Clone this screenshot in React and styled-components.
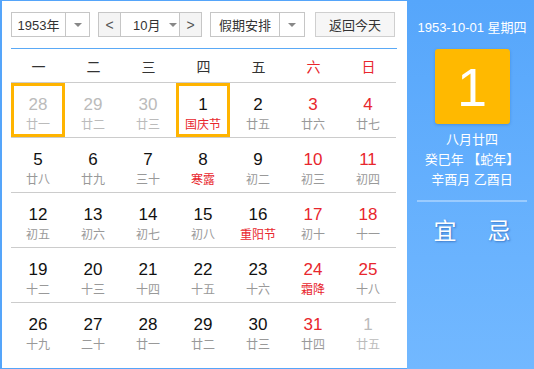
import React from "react";
import styled, { createGlobalStyle } from "styled-components";

const FONT = `"Liberation Sans", "Noto Sans CJK SC", sans-serif`;

const GlobalStyle = createGlobalStyle`
  body {
    margin: 0;
    background: #fff;
    font-family: ${FONT};
  }
`;

const WEEKDAYS = ["一", "二", "三", "四", "五", "六", "日"];

// [day, lunar, flags] flags: o = other month, f = festival, h = highlighted
const WEEKS = [
  [[28, "廿一", "oh"], [29, "廿二", "o"], [30, "廿三", "o"], [1, "国庆节", "fh"], [2, "廿五"], [3, "廿六"], [4, "廿七"]],
  [[5, "廿八"], [6, "廿九"], [7, "三十"], [8, "寒露", "f"], [9, "初二"], [10, "初三"], [11, "初四"]],
  [[12, "初五"], [13, "初六"], [14, "初七"], [15, "初八"], [16, "重阳节", "f"], [17, "初十"], [18, "十一"]],
  [[19, "十二"], [20, "十三"], [21, "十四"], [22, "十五"], [23, "十六"], [24, "霜降", "f"], [25, "十八"]],
  [[26, "十九"], [27, "二十"], [28, "廿一"], [29, "廿二"], [30, "廿三"], [31, "廿四"], [1, "廿五", "o"]],
];

export default function App() {
  return (
    <>
      <GlobalStyle />
      <Frame>
        <Main>
          <Toolbar>
            <Select $w={79} $text={55}>
              <span>1953年</span>
              <Caret />
            </Select>
            <MonthGroup>
              <NavBtn>&lt;</NavBtn>
              <MonthSel>
                <span>10月</span>
                <Caret />
              </MonthSel>
              <NavBtn>&gt;</NavBtn>
            </MonthGroup>
            <Select $w={95} $text={70}>
              <span>假期安排</span>
              <Caret />
            </Select>
            <TodayBtn>返回今天</TodayBtn>
          </Toolbar>
          <Grid>
            <HeadRow>
              {WEEKDAYS.map((w, i) => (
                <HeadCell key={w} $red={i >= 5}>{w}</HeadCell>
              ))}
            </HeadRow>
            {WEEKS.map((week, r) => (
              <Row key={r} $last={r === WEEKS.length - 1}>
                {week.map(([d, lunar, flags = ""], i) => {
                  const other = flags.includes("o");
                  return (
                    <Cell key={i} $hl={flags.includes("h")}>
                      <Day $tone={other ? "light" : i >= 5 ? "red" : "dark"}>{d}</Day>
                      <Lunar $tone={flags.includes("f") ? "red" : other ? "light" : "gray"}>
                        {lunar}
                      </Lunar>
                    </Cell>
                  );
                })}
              </Row>
            ))}
          </Grid>
        </Main>
        <Side>
          <DateLine>1953-10-01 星期四</DateLine>
          <BigDay>1</BigDay>
          <LunarInfo>
            <div>八月廿四</div>
            <div>癸巳年 【蛇年】</div>
            <div>辛酉月 乙酉日</div>
          </LunarInfo>
          <Divider />
          <Omen>
            <span>宜</span>
            <span>忌</span>
          </Omen>
        </Side>
      </Frame>
    </>
  );
}

const Frame = styled.div`
  width: 534px;
  height: 369px;
  box-sizing: border-box;
  display: flex;
  padding: 1px 0 1px 2px;
  background: #55a5fa;
`;

const Main = styled.div`
  width: 405px;
  background: #fff;
  padding: 11px 10px 0 9px;
  box-sizing: border-box;
`;

const Toolbar = styled.div`
  display: flex;
  height: 25px;
  gap: 8px;
  padding-bottom: 11px;
  border-bottom: 1px solid #5aa9f6;
  font-size: 13px;
  color: #333;
`;

const Select = styled.div`
  width: ${(p) => p.$w}px;
  box-sizing: border-box;
  display: grid;
  grid-template-columns: ${(p) => p.$text - 1}px 1fr;
  border: 1px solid #c6c6c6;
  background: #fff;
  span {
    display: flex;
    align-items: center;
    justify-content: center;
    border-right: 1px solid #c6c6c6;
  }
`;

const Caret = styled.i`
  display: flex;
  align-items: center;
  justify-content: center;
  &::after {
    content: "";
    border-left: 4px solid transparent;
    border-right: 4px solid transparent;
    border-top: 4px solid #888;
  }
`;

const MonthGroup = styled.div`
  width: 104px;
  box-sizing: border-box;
  display: flex;
  border: 1px solid #c6c6c6;
`;

const NavBtn = styled.div`
  width: 21px;
  display: flex;
  align-items: center;
  justify-content: center;
  background: #f4f4f4;
  color: #555;
  font-size: 14px;
  &:first-child {
    border-right: 1px solid #c6c6c6;
  }
  &:last-child {
    border-left: 1px solid #c6c6c6;
  }
`;

const MonthSel = styled.div`
  flex: 1;
  display: flex;
  align-items: center;
  padding-left: 12px;
  gap: 9px;
  background: #fff;
`;

const TodayBtn = styled.div`
  width: 80px;
  margin-left: 2px;
  box-sizing: border-box;
  display: flex;
  align-items: center;
  justify-content: center;
  border: 1px solid #cfcfcf;
  background: #f6f6f6;
  color: #333;
`;

const Grid = styled.div`
  width: 385px;
`;

const HeadRow = styled.div`
  display: grid;
  grid-template-columns: repeat(7, 55px);
  height: 33px;
  border-bottom: 1px solid #ccc;
`;

const HeadCell = styled.div`
  display: flex;
  align-items: center;
  justify-content: center;
  font-size: 14px;
  color: ${(p) => (p.$red ? "#e8262d" : "#333")};
`;

const Row = styled.div`
  display: grid;
  grid-template-columns: repeat(7, 55px);
  height: 54px;
  border-bottom: 1px solid ${(p) => (p.$last ? "transparent" : "#ccc")};
`;

const Cell = styled.div`
  width: 54px;
  box-sizing: border-box;
  display: flex;
  flex-direction: column;
  align-items: center;
  padding-top: 9px;
  border: 3px solid ${(p) => (p.$hl ? "#ffb400" : "transparent")};
`;

const TONES = {
  dark: "#111",
  red: "#e8262d",
  gray: "#999",
  light: "#bbb",
};

const Day = styled.div`
  font-size: 17px;
  line-height: 20px;
  color: ${(p) => TONES[p.$tone]};
`;

const Lunar = styled.div`
  font-size: 12px;
  line-height: 18px;
  margin-top: 1px;
  color: ${(p) => TONES[p.$tone]};
`;

const Side = styled.div`
  flex: 1;
  margin-top: -1px;
  margin-bottom: -1px;
  background: linear-gradient(180deg, #56a6fb 0%, #6ab3fe 70%, #72b8ff 100%);
  color: #fff;
  display: flex;
  flex-direction: column;
  align-items: center;
  padding-left: 3px;
`;

const DateLine = styled.div`
  margin-top: 19px;
  font-size: 13px;
  line-height: 18px;
`;

const BigDay = styled.div`
  margin-top: 12px;
  width: 75px;
  height: 75px;
  border-radius: 3px;
  background: #ffb900;
  box-shadow: 0 1px 3px rgba(0, 60, 140, 0.25);
  display: flex;
  align-items: center;
  justify-content: center;
  font-size: 54px;
  line-height: 1;
`;

const LunarInfo = styled.div`
  margin-top: 6px;
  text-align: center;
  font-size: 13px;
  line-height: 20px;
`;

const Divider = styled.div`
  width: 110px;
  height: 2px;
  margin-top: 10px;
  background: rgba(255, 255, 255, 0.35);
`;

const Omen = styled.div`
  display: flex;
  gap: 31px;
  margin-top: 15px;
  font-size: 23px;
  line-height: 28px;
  text-shadow: 1px 1px 2px rgba(30, 80, 160, 0.6);
`;
